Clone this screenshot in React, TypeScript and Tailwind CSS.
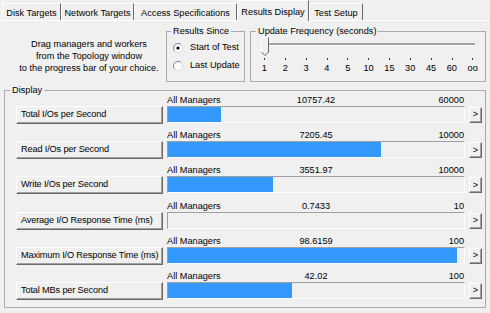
const TABS = [
  { label: 'Disk Targets', w: 'w-[59px]' },
  { label: 'Network Targets', w: 'w-[73px]' },
  { label: 'Access Specifications', w: 'w-[103px]' },
  { label: 'Results Display', w: 'w-[72px]', active: true },
  { label: 'Test Setup', w: 'w-[54px]' },
];

const TICKS = ['1', '2', '3', '4', '5', '10', '15', '30', '45', '60', 'oo'];

type Row = { label: string; value: string; max: string; fill: number };
const ROWS: Row[] = [
  { label: 'Total I/Os per Second', value: '10757.42', max: '60000', fill: 0.179 },
  { label: 'Read I/Os per Second', value: '7205.45', max: '10000', fill: 0.72 },
  { label: 'Write I/Os per Second', value: '3551.97', max: '10000', fill: 0.355 },
  { label: 'Average I/O Response Time (ms)', value: '0.7433', max: '10', fill: 0 },
  { label: 'Maximum I/O Response Time (ms)', value: '98.6159', max: '100', fill: 0.976 },
  { label: 'Total MBs per Second', value: '42.02', max: '100', fill: 0.42 },
];

function Radio({ checked }: { checked?: boolean }) {
  return (
    <svg width="10" height="10" viewBox="0 0 10 10" className="shrink-0">
      <circle cx="5" cy="5" r="4.5" fill="#fff" />
      <path d="M1.8 8.2 A4.5 4.5 0 0 1 8.2 1.8" stroke="#808080" fill="none" />
      <path d="M8.2 1.8 A4.5 4.5 0 0 1 1.8 8.2" stroke="#dcdcdc" fill="none" />
      {checked && <circle cx="5" cy="5" r="1.6" fill="#000" />}
    </svg>
  );
}

function Slider() {
  return (
    <svg width="234" height="25" viewBox="0 0 234 25" className="block">
      <rect x="15" y="6" width="209" height="2" fill="#a0a0a0" />
      <rect x="15" y="8" width="209" height="1" fill="#fff" />
      {TICKS.map((_, i) => (
        <rect key={i} x={Math.round(13 + i * 20.84)} y="21" width="1" height="2" fill="#333" />
      ))}
      <polygon points="10.5,0.5 17.5,0.5 17.5,15 14,18.5 10.5,15" fill="#f0f0f0" />
      <polyline points="10.5,15 10.5,0.5 17.5,0.5" stroke="#fff" fill="none" />
      <polyline points="17.5,0.5 17.5,15 14,18.5 10.5,15" stroke="#696969" fill="none" />
    </svg>
  );
}

export default function App() {
  return (
    <div className="h-[313px] w-[490px] overflow-hidden bg-[#f0f0f0] font-['Liberation_Sans',Arial,sans-serif] text-[9.2px] text-black">
      {/* tabs */}
      <div className="flex h-[20px] items-end pl-[2px]">
        {TABS.map((t) =>
          t.active ? (
            <div key={t.label} className={`relative z-10 -mb-px h-[21px] ${t.w} border-l border-t border-r border-l-white border-t-white border-r-[#696969] bg-[#f0f0f0] pt-[5px] text-center leading-[12px] whitespace-nowrap`}>
              {t.label}
            </div>
          ) : (
            <div key={t.label} className={`h-[17px] ${t.w} border-l border-t border-r border-l-white border-t-white border-r-[#696969] pt-[3px] text-center leading-[12px] whitespace-nowrap`}>
              {t.label}
            </div>
          ),
        )}
      </div>

      <div className="border-t border-white pt-[4px]">
        {/* top section */}
        <div className="flex h-[57px]">
          <div className="w-[166px] pl-[12px] pt-[13px] text-center leading-[12px]">
            <div>Drag managers and workers</div>
            <div>from the Topology window</div>
            <div>to the progress bar of your choice.</div>
          </div>

          <fieldset className="h-[57px] w-[79px] border border-[#aaaaaa]">
            <legend className="ml-[4px] px-[2px] leading-[12px]">Results Since</legend>
            <div className="pl-[6px] pt-[5px]">
              <div className="flex h-[12px] items-center gap-[7px]">
                <Radio checked />
                <span>Start of Test</span>
              </div>
              <div className="mt-[6px] flex h-[12px] items-center gap-[7px]">
                <Radio />
                <span>Last Update</span>
              </div>
            </div>
          </fieldset>

          <fieldset className="ml-[5px] h-[57px] w-[236px] border border-[#aaaaaa]">
            <legend className="ml-[5px] px-[2px] leading-[12px]">Update Frequency (seconds)</legend>
            <Slider />
            <div className="ml-[3px] grid grid-cols-[repeat(11,20.84px)] leading-[12px]">
              {TICKS.map((t) => (
                <span key={t} className="text-center">{t}</span>
              ))}
            </div>
          </fieldset>
        </div>

        {/* display */}
        <fieldset className="ml-[4px] mt-[2px] h-[224px] w-[482px] border border-[#aaaaaa]">
          <legend className="ml-[5px] px-[2px] leading-[12px]">Display</legend>
          <div className="-mt-[2px]">
            {ROWS.map((r) => (
              <div key={r.label} className="flex h-[35.2px] pl-[11px]">
                <button className="mt-[12px] flex h-[18px] w-[147px] items-center overflow-hidden whitespace-nowrap border border-t-white border-l-white border-r-[#696969] border-b-[#696969] pl-[4px] text-left tracking-[-0.15px] shadow-[inset_-1px_-1px_0_#a0a0a0]">
                  {r.label}
                </button>
                <div className="ml-[4px] w-[298px]">
                  <div className="grid h-[12px] grid-cols-[1fr_auto_1fr] leading-[12px]">
                    <span>All Managers</span>
                    <span>{r.value}</span>
                    <span className="pr-[1px] text-right">{r.max}</span>
                  </div>
                  <div className="h-[17px] border border-t-[#a0a0a0] border-l-[#a0a0a0] border-r-white border-b-white">
                    <div className="h-full bg-[#3399ff]" style={{ width: `${Math.round(r.fill * 296)}px` }} />
                  </div>
                </div>
                <button className="ml-[4px] mt-[13px] flex h-[16px] w-[13px] items-center justify-center border border-t-white border-l-white border-r-[#696969] border-b-[#696969] leading-none shadow-[inset_-1px_-1px_0_#a0a0a0]">
                  &gt;
                </button>
              </div>
            ))}
          </div>
        </fieldset>
      </div>
    </div>
  );
}
